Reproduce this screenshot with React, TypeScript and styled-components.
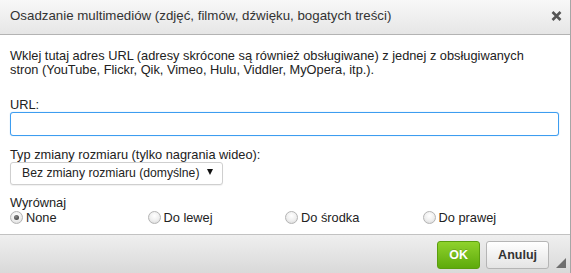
import React, { useState } from 'react';
import styled, { createGlobalStyle } from 'styled-components';

const GlobalStyle = createGlobalStyle`
  html, body {
    margin: 0;
    padding: 0;
    background: #fff;
  }
  body {
    font-family: 'Liberation Sans', Arial, sans-serif;
    color: #333;
  }
`;

const Dialog = styled.div`
  width: 571px;
  height: 273px;
  box-sizing: border-box;
  border-right: 1px solid #a6a6a6;
  display: flex;
  flex-direction: column;
  background: #fff;
`;

const Header = styled.div`
  height: 34px;
  flex: none;
  display: flex;
  align-items: center;
  justify-content: space-between;
  padding: 0 8px 0 10px;
  background: linear-gradient(to bottom, #f8f8f8, #e6e6e6);
  border-bottom: 1px solid #b3b3b3;
`;

const Title = styled.h1`
  margin: 0 0 3px;
  font-size: 13.3px;
  font-weight: normal;
  color: #333;
`;

const Close = styled.button`
  border: 0;
  padding: 0;
  background: none;
  width: 11px;
  height: 10px;
  margin-bottom: 2px;
  display: flex;
  cursor: pointer;
`;

const Body = styled.div`
  flex: 1;
  padding: 14px 10px 0;
  font-size: 12.8px;
  line-height: 14px;
  color: #222;
`;

const Intro = styled.p`
  margin: 0 0 20px;
  max-width: 520px;
  line-height: 14.4px;
`;

const Label = styled.label`
  display: block;
`;

const UrlInput = styled.input`
  display: block;
  box-sizing: border-box;
  width: 549px;
  height: 24px;
  margin: 0 0 12px;
  border: 1px solid #3d9df0;
  border-radius: 3px;
  box-shadow: 0 0 1px rgba(61, 157, 240, 0.6);
  outline: none;
  font: inherit;
`;

const Select = styled.button`
  box-sizing: border-box;
  width: 213px;
  height: 23px;
  margin: 0 0 11px;
  padding: 0 9px 0 11px;
  display: flex;
  align-items: center;
  justify-content: space-between;
  background: #fff;
  border: 1px solid #cfcfcf;
  border-radius: 3px;
  box-shadow: 0 1px 1px rgba(0, 0, 0, 0.06);
  font-family: inherit;
  font-size: 12.2px;
  color: #222;
`;

const Caret = styled.span`
  flex: none;
  width: 0;
  height: 0;
  border-left: 3px solid transparent;
  border-right: 3px solid transparent;
  border-top: 6px solid #111;
  margin-bottom: 2px;
`;

const RadioRow = styled.div`
  display: grid;
  grid-template-columns: repeat(4, 1fr);
  margin-top: 1px;
`;

const RadioLabel = styled.label`
  display: flex;
  align-items: center;
  gap: 3px;
  font-size: 12.8px;
`;

const Radio = styled.input`
  appearance: none;
  margin: 0 0 2px;
  width: 13px;
  height: 13px;
  border-radius: 50%;
  border: 1px solid #b4b4b4;
  box-sizing: border-box;
  background: radial-gradient(circle at 50% 35%, #ffffff 0%, #eeeeee 55%, #d4d4d4 100%);
  display: grid;
  place-content: center;
  &:checked::before {
    content: '';
    width: 5px;
    height: 5px;
    border-radius: 50%;
    background: radial-gradient(circle at 40% 35%, #888, #333);
  }
`;

const Footer = styled.div`
  flex: none;
  display: flex;
  justify-content: flex-end;
  align-items: flex-start;
  padding: 6px 4px 0 0;
  box-sizing: content-box;
  background: linear-gradient(to bottom, #efefef, #d9d9d9);
  border-top: 1px solid #c2c2c2;
  height: 32px;
`;

const Button = styled.button<{ $primary?: boolean }>`
  height: 28px;
  box-sizing: border-box;
  margin-right: 6px;
  padding: 0 11px;
  border-radius: 3px;
  font-family: inherit;
  font-size: 12.5px;
  font-weight: bold;
  cursor: pointer;
  color: ${(p) => (p.$primary ? '#fff' : '#333')};
  border: 1px solid ${(p) => (p.$primary ? '#5a9e0e' : '#b5b5b5')};
  background: ${(p) =>
    p.$primary
      ? 'linear-gradient(to bottom, #8fd22c, #5eaa0c)'
      : 'linear-gradient(to bottom, #ffffff, #e4e4e4)'};
  text-shadow: ${(p) => (p.$primary ? '0 -1px 0 rgba(0,0,0,0.15)' : 'none')};
`;

const Grip = styled.svg`
  align-self: flex-end;
  margin: 0 0 5px 1px;
`;

const options = ['None', 'Do lewej', 'Do środka', 'Do prawej'];

const App: React.FunctionComponent = () => {
  const [align, setAlign] = useState('None');

  return (
    <>
      <GlobalStyle />
      <Dialog>
        <Header>
          <Title>Osadzanie multimediów (zdjęć, filmów, dźwięku, bogatych treści)</Title>
          <Close aria-label="Zamknij">
            <svg width="11" height="10" viewBox="0 0 11 10">
              <path d="M1.5 1 L9.5 9 M9.5 1 L1.5 9" stroke="#555" strokeWidth="2.6" />
            </svg>
          </Close>
        </Header>

        <Body>
          <Intro>
            Wklej tutaj adres URL (adresy skrócone są również obsługiwane) z jednej z obsługiwanych
            stron (YouTube, Flickr, Qik, Vimeo, Hulu, Viddler, MyOpera, itp.).
          </Intro>

          <Label htmlFor="url">URL:</Label>
          <UrlInput id="url" type="text" />

          <Label>Typ zmiany rozmiaru (tylko nagrania wideo):</Label>
          <Select>
            Bez zmiany rozmiaru (domyślne)
            <Caret />
          </Select>

          <Label>Wyrównaj</Label>
          <RadioRow>
            {options.map((o) => (
              <RadioLabel key={o}>
                <Radio
                  type="radio"
                  name="align"
                  checked={align === o}
                  onChange={() => setAlign(o)}
                />
                {o}
              </RadioLabel>
            ))}
          </RadioRow>
        </Body>

        <Footer>
          <Button $primary>OK</Button>
          <Button>Anuluj</Button>
          <Grip width="10" height="10" viewBox="0 0 10 10">
            <path d="M10 0 L10 10 L0 10 Z" fill="#6f6f6f" />
          </Grip>
        </Footer>
      </Dialog>
    </>
  );
};

export default App;
